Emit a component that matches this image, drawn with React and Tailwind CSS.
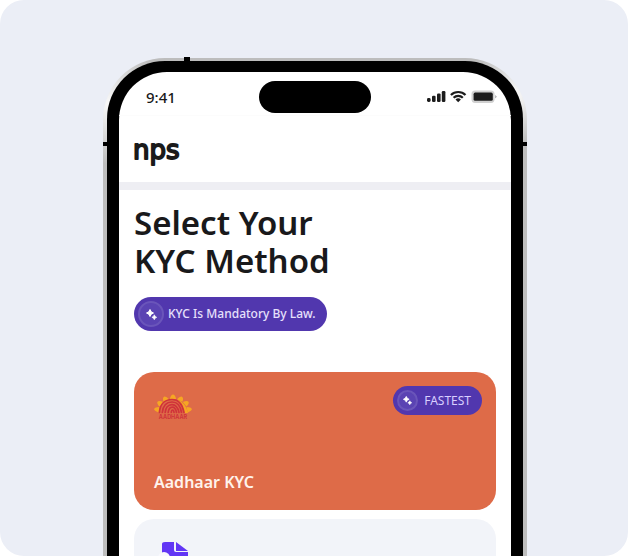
function StatusIcons() {
  return (
    <svg width="70" height="14" viewBox="0 0 70 14" role="img" aria-label="Signal, Wi-Fi and battery" fill="#1c1c1c">
      <rect x="0" y="8" width="3.6" height="4" rx="1.4" />
      <rect x="5" y="5.8" width="3.6" height="6.2" rx="1.2" />
      <rect x="10" y="3.4" width="3.6" height="8.6" rx="1.2" />
      <rect x="14.8" y="1" width="3.6" height="11" rx="1.2" />
      <g fill="none" stroke="#1c1c1c" strokeWidth="2.2">
        <path d="M23.9 5a10.4 10.4 0 0 1 14.6 0" />
        <path d="M26.6 7.8a6.5 6.5 0 0 1 9.2 0" />
      </g>
      <path d="M28.5 9.5a3.8 3.8 0 0 1 5.4 0L31.2 12.2Z" />
      <rect x="44.5" y="0.5" width="23" height="12.4" rx="3.6" fill="#d0d0d0" />
      <rect x="46.6" y="2.6" width="19.2" height="8.2" rx="1.6" />
      <path d="M68.7 5v3.6q1.3-1.8 0-3.6" />
    </svg>
  );
}

function NpsLogo() {
  return (
    <svg width="56" height="40" viewBox="-2 -8 56 40" role="img" aria-label="nps">
      <text
        x="-1"
        y="19"
        fontSize="26"
        fill="#1a1a1a"
        stroke="#1a1a1a"
        strokeWidth="1.8"
        strokeLinejoin="round"
        className="font-['DejaVu_Sans',sans-serif]"
      >
        nps
      </text>
    </svg>
  );
}

function Sparkles({ large }) {
  return (
    <span
      className={`flex shrink-0 items-center justify-center rounded-full border-2 border-[#6a55ba] bg-[#5a43b3] ${
        large ? "size-[26px]" : "size-[21px]"
      }`}
    >
      <svg width={large ? 11 : 9} height={large ? 11 : 9} viewBox="0 0 11 11" fill="#fff" aria-hidden="true">
        <path d="M4 .5Q4.700 3.300 7.500 4 4.700 4.700 4 7.500 3.300 4.700.5 4 3.300 3.300 4 .5Z" stroke="#fff" strokeWidth="1" />
        <path d="M8.300 5.800Q8.800 7.800 10.700 8.300 8.800 8.800 8.300 10.700 7.800 8.800 5.900 8.300 7.800 7.800 8.300 5.800Z" stroke="#fff" strokeWidth=".7" />
      </svg>
    </span>
  );
}

function AadhaarLogo() {
  const rays = [-80, -54, -28, 0, 28, 54, 80];
  return (
    <svg width="38" height="26" viewBox="0 0 38 26" role="img" aria-label="Aadhaar">
      <g fill="#f6a623">
        {rays.map((a) => (
          <path key={a} d="M16.200 5Q17 .8 19 .6 21 .8 21.800 5Z" transform={`translate(19 18) scale(1.1 1) rotate(${a}) translate(-19 -18)`} />
        ))}
        <path d="M23 5.500Q32 8.500 34 19H30.500Q29 11 23 5.500Z" />
      </g>
      <g fill="none" stroke="#d0333a" strokeWidth="1.700" strokeLinecap="round">
        <path d="M5.500 18.500C6 10 11 5.500 18 5.500S28.500 10 30 18.500" />
        <path d="M8.300 18.500C9 12 12.500 8 18 8S26.500 12 27.500 18.500" />
        <path d="M11.200 18.500C11.500 14 14 10.600 18 10.600S24 14 25 18.500" />
        <path d="M14.200 18.500C14.500 15.500 15.800 13.200 18.300 13.200S22 16 22.500 18.500" />
        <path d="M17.300 18.500Q17.500 16 18.600 16T20 18.500" />
      </g>
      <text x="19" y="25" fontSize="5.500" fontWeight="700" textAnchor="middle" fill="#d0333a" className="font-['Inter',sans-serif]">
        AADHAAR
      </text>
    </svg>
  );
}

function DocumentIcon() {
  return (
    <svg width="32" height="36" viewBox="0 0 32 36" aria-hidden="true">
      <path d="M4 3Q4 1 7 1H16V9Q16 11 18 11H30V36H4Z" fill="#6236f5" />
      <path d="M18 1L30 10H18Z" fill="#6236f5" />
      <circle cx="6" cy="17" r="6" fill="#f9f9fd" />
    </svg>
  );
}

export default function App() {
  return (
    <div className="h-screen overflow-hidden bg-white font-['Noto_Sans','Open_Sans',sans-serif] text-[#19191b]">
      <main className="h-full overflow-hidden rounded-[24px] bg-[#ebeef6] pt-[58px] pl-[2px]">
        <div className="relative mx-auto max-w-[424px] rounded-t-[62px] bg-[#bdbdbd] bg-[radial-gradient(circle_at_6px_46px,#fafafa,transparent_60px),radial-gradient(circle_at_412px_36px,#fafafa,transparent_50px)] px-1 pt-[3px]">
          <span className="absolute -top-px left-[81px] h-1.5 w-1.5 bg-black" />
          <span className="absolute top-[84px] left-0 h-1 w-2 bg-black" />
          <span className="absolute top-[84px] right-0 h-1 w-2 bg-black" />
          <div className="rounded-t-[58px] bg-black px-3 pt-[11px]">
            <div className="rounded-t-[48px] bg-white">
              <div className="grid h-11 grid-cols-[1fr_auto_1fr] items-center border-b border-[#fcfcfc] px-[14px] pt-1.5">
                <time className="pl-[13px] text-[15px] leading-5 font-medium">9:41</time>
                <div className="h-8 w-[112px] rounded-full bg-black" />
                <div className="flex justify-end">
                  <StatusIcons />
                </div>
              </div>
              <header className="flex h-[74px] items-start border-b-8 border-[#eeeef3] px-[13px] pt-4">
                <NpsLogo />
              </header>
              <section className="px-[15px] pt-[14px]">
                <h1 className="text-[33px] leading-[38px] font-semibold">
                  Select Your
                  <br />
                  KYC Method
                </h1>
                <p className="mt-[17px] flex h-[34px] w-fit items-center gap-1 rounded-full bg-[#5137ae] pr-[11px] pl-1 text-[12px] font-medium text-[#e6e0fb]">
                  <Sparkles large />
                  KYC Is Mandatory By Law.
                </p>
                <div className="mt-[41px] flex flex-col gap-[9px]">
                  <button type="button" className="flex h-[138px] w-full flex-col justify-between rounded-[20px] bg-[#de6b48] pt-[14px] pr-[14px] pb-4 pl-5 text-left">
                    <span className="flex w-full items-start justify-between">
                      <span className="pt-2">
                        <AadhaarLogo />
                      </span>
                      <span className="flex h-[29px] items-center gap-1.5 rounded-full bg-[#5137ae] pr-[11px] pl-1 text-[12px] text-[#d9cfff]">
                        <Sparkles />
                        FASTEST
                      </span>
                    </span>
                    <span className="text-[16px] leading-6 font-semibold text-[#fff3ec]">Aadhaar KYC</span>
                  </button>
                  <button type="button" aria-label="Document KYC" className="flex h-[138px] w-full items-start rounded-[20px] bg-[#f2f4f9] px-6 pt-[22px]">
                    <DocumentIcon />
                  </button>
                </div>
              </section>
            </div>
          </div>
        </div>
      </main>
    </div>
  );
}
